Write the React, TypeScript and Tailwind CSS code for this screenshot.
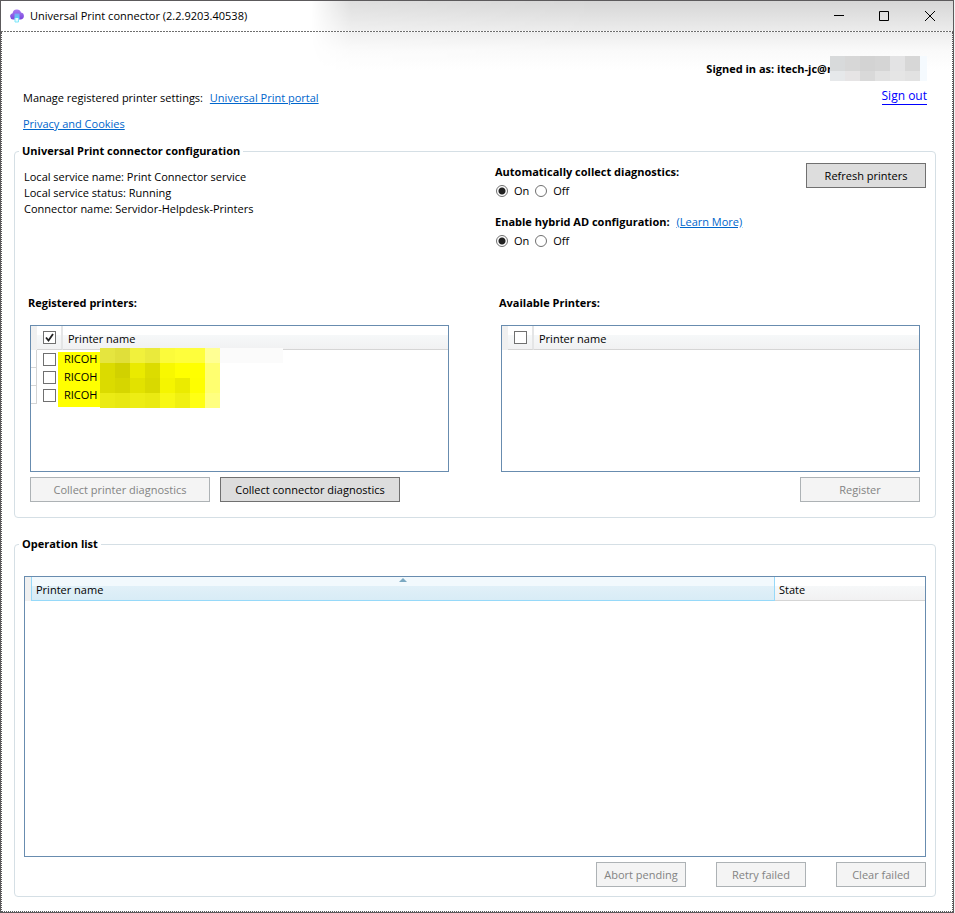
import React, { useState } from 'react';

interface MosaicProps {
  rows: string[][];
}

// Account name and printer models are masked with coarse pixel blocks
const ACCOUNT_MASK = [
  ['#d8dadb', '#d7d7d7', '#d3d3d3', '#d5d5d5', '#e3e3e4', '#d7d7d7'],
  ['#e6e8ea', '#e6e4e5', '#d9d9d9', '#e2e2e2', '#e5e5e5', '#e2e2e2'],
];

const PRINTER_MASK = [
  ['#e5e53f', '#e0df3a', '#f1f13c', '#eaea3c', '#fbfb3b', '#fefe3c', '#fefe3c', '#ffff94'],
  ['#dbdb00', '#d1d100', '#eaea00', '#dcdc00', '#f8f800', '#ffff00', '#ffff00', '#ffff70'],
  ['#dbdb00', '#d6d600', '#e2e200', '#d9d900', '#f5f500', '#ebeb00', '#fefe00', '#ffff70'],
  ['#ebeb14', '#e8e812', '#eded14', '#eaea12', '#f8f814', '#f0f012', '#ffff14', '#ffff80'],
];

const Mosaic: React.FC<MosaicProps> = ({ rows }) => (
  <>
    {rows.map((row, y) =>
      row.map((fill, x) => <rect key={`${x}-${y}`} x={x * 15} y={y * 15} width="15" height="15" fill={fill} />)
    )}
  </>
);

const ConnectorLogo: React.FC = () => (
  <svg width="16" height="16" viewBox="0 0 16 16" aria-hidden="true">
    <defs>
      <linearGradient id="cloud" x1="0" y1="0" x2="0" y2="1">
        <stop offset="0" stopColor="#a87cf3" />
        <stop offset="1" stopColor="#7a45dc" />
      </linearGradient>
      <linearGradient id="printer" x1="0" y1="0" x2="0" y2="1">
        <stop offset="0" stopColor="#7aa2f5" />
        <stop offset="1" stopColor="#56d6f5" />
      </linearGradient>
    </defs>
    <path d="M4 11.500a3.200 3.200 0 0 1-.4-6.300A4.300 4.300 0 0 1 12 4.600a3.500 3.500 0 0 1 0 6.900z" fill="url(#cloud)" />
    <path d="M5.500 5.500h5v5.500h-5z" fill="url(#printer)" />
    <path d="M6 10v4h3.500v-4" fill="#e3fbff" stroke="#7fe6f9" />
  </svg>
);

interface PushButtonProps {
  label: string;
  width: string;
  disabled?: boolean;
}

const PushButton: React.FC<PushButtonProps> = ({ label, width, disabled }) => (
  <button
    type="button"
    disabled={disabled}
    className={`h-[25px] border border-[#707070] bg-[#dddddd] pt-px text-center whitespace-nowrap disabled:border-[#adb2b5] disabled:bg-[#f4f4f4] disabled:text-[#838383] ${width}`}
  >
    {label}
  </button>
);

interface CheckBoxProps {
  label: string;
  checked: boolean;
  onChange: () => void;
}

const CheckBox: React.FC<CheckBoxProps> = ({ label, checked, onChange }) => (
  <span className="relative ml-[6px] block size-[13px]">
    <input
      type="checkbox"
      aria-label={label}
      checked={checked}
      onChange={onChange}
      className="block size-[13px] appearance-none border border-[#707070] bg-white"
    />
    {checked && (
      <svg className="pointer-events-none absolute inset-0" width="13" height="13" viewBox="0 0 13 13" aria-hidden="true">
        <path d="M3 6.500l2.500 3L10 3" fill="none" stroke="#212121" strokeWidth="1.800" />
      </svg>
    )}
  </span>
);

interface OnOffProps {
  name: string;
  legend: string;
}

const OnOff: React.FC<OnOffProps> = ({ name, legend }) => {
  const [value, setValue] = useState('On');
  return (
    <div role="radiogroup" aria-label={legend} className="mt-[3px] flex gap-[6px] pl-px">
      {['On', 'Off'].map(option => (
        <label key={option} className="flex items-center gap-[6px]">
          <input
            type="radio"
            name={name}
            checked={value === option}
            onChange={() => setValue(option)}
            className="size-[12px] appearance-none rounded-full border border-[#707070] bg-white checked:bg-[radial-gradient(circle,#212121_3px,#ffffff_4px)]"
          />
          {option}
        </label>
      ))}
    </div>
  );
};

interface PrinterListProps {
  title: string;
  printers: string[];
  allChecked: boolean;
  children: React.ReactNode;
}

const PrinterList: React.FC<PrinterListProps> = ({ title, printers, allChecked, children }) => {
  const [all, setAll] = useState(allChecked);
  const [picked, setPicked] = useState<number[]>([]);

  const toggle = (index: number) => {
    setPicked(picked.includes(index) ? picked.filter(i => i !== index) : [...picked, index]);
  };

  return (
    <section>
      <h2 className="font-bold">{title}</h2>
      <div className="mt-[14px] px-[2px]">
        <div className="relative h-[147px] border border-[#688caf] bg-white">
          {printers.length > 0 && <div className="absolute top-[26px] left-[27px] h-[55px] w-[42px] bg-[#ffff00]" />}
          <table className="relative w-full table-fixed border-separate border-spacing-0 text-left">
            <thead>
              <tr className="h-[24px]">
                <td className="w-[6px] bg-[#f0f0f0] p-0" />
                <th className="w-[26px] border-r-2 border-b border-r-[#e4e5e6] border-b-[#d5d5d5] bg-[linear-gradient(#ffffff_40%,#f6f8f9_40%,#f1f1f2)] p-0">
                  <CheckBox label={`Select all: ${title}`} checked={all} onChange={() => setAll(!all)} />
                </th>
                <th className="border-b border-[#d5d5d5] bg-[linear-gradient(#ffffff_40%,#f6f8f9_40%,#f1f1f2)] p-0 pt-[2px] pl-[5px] font-normal">
                  Printer name
                </th>
              </tr>
            </thead>
            <tbody>
              {printers.map((printer, index) => (
                <tr key={index} className="h-[18px]">
                  <td className="border-r border-b border-[#d5d5d5] p-0" />
                  <td className="p-0">
                    <CheckBox label={`${printer} ${index + 1}`} checked={picked.includes(index)} onChange={() => toggle(index)} />
                  </td>
                  <td className="p-0 pl-px">{printer}</td>
                </tr>
              ))}
            </tbody>
          </table>
          {printers.length > 0 && (
            <svg className="pointer-events-none absolute top-[22px] left-[69px]" width="183" height="60" aria-hidden="true">
              <rect x="120" width="63" height="15" fill="#fbfbfb" />
              <Mosaic rows={PRINTER_MASK} />
            </svg>
          )}
        </div>
        <div className="mt-[5px] flex gap-[10px]">{children}</div>
      </div>
    </section>
  );
};

const App: React.FC = () => {
  return (
    <div className="min-h-screen bg-[#f3f3f3] pr-px font-['Open_Sans','Noto_Sans',sans-serif] text-[11px] leading-[16px] text-black">
      <div className="relative flex min-h-screen flex-col border border-[#5c5a5c] bg-white">
        {/* Soft shade falling over the top right of the window */}
        <div className="pointer-events-none absolute inset-x-0 top-0 h-[70px] bg-[linear-gradient(#d6d6d6,#ececec_30px,#fafafa_50px,#ffffff)] [mask-image:linear-gradient(to_right,transparent_310px,rgba(0,0,0,0.800)_350px,black_600px)]" />

        <header className="relative flex h-[30px] items-center pl-[8px]">
          <ConnectorLogo />
          <h1 className="ml-[5px] flex-1">Universal Print connector (2.2.9203.40538)</h1>
          <button type="button" aria-label="Minimize" className="flex h-full w-[46px] items-center justify-center">
            <svg width="12" height="10" viewBox="0 0 12 10" stroke="#000">
              <path d="M2 4.500h10" />
            </svg>
          </button>
          <button type="button" aria-label="Maximize" className="flex h-full w-[46px] items-center justify-center">
            <svg width="10" height="10" viewBox="0 0 10 10" fill="none" stroke="#000">
              <path d="M.5.5h9v9h-9z" />
            </svg>
          </button>
          <button type="button" aria-label="Close" className="flex h-full w-[46px] items-center justify-center">
            <svg width="10" height="10" viewBox="0 0 10 10" stroke="#000">
              <path d="M0 0l10 10M10 0L0 10" />
            </svg>
          </button>
        </header>
        <div className="relative h-px bg-[repeating-linear-gradient(to_right,#6e6e6e_0px,#6e6e6e_2px,#ffffff_2px,#ffffff_3px)]" />

        <main className="relative flex flex-1 flex-col border-x border-b border-dotted border-[#5c5a5c] pr-[16px] pb-[14px] pl-[12px]">
          <div className="flex justify-between px-[9px] pt-[24px]">
            <div className="pt-[34px]">
              <p>
                Manage registered printer settings:{' '}
                <a href="#portal" className="ml-[4px] text-[#0066cc] underline">Universal Print portal</a>
              </p>
              <p className="mt-[10px]">
                <a href="#privacy" className="text-[#0066cc] underline">Privacy and Cookies</a>
              </p>
            </div>
            <div className="flex flex-col items-end">
              <p className="flex items-center font-bold">
                Signed in as: itech-jc@r
                <svg className="relative -ml-[2px]" width="97" height="25" aria-hidden="true">
                  <rect width="97" height="25" fill="#f5fafe" />
                  <Mosaic rows={ACCOUNT_MASK} />
                </svg>
              </p>
              <a href="#signout" className="mt-[7px] border-b border-[#0000ff] text-[12px] text-[#0000ff]">Sign out</a>
            </div>
          </div>

          <fieldset className="mt-[11px] rounded-[4px] border border-[#d5dfe5]">
            <legend className="ml-[4px] px-[3px] font-bold">Universal Print connector configuration</legend>
            <div className="grid grid-cols-2 gap-[40px] px-[9px] pb-[46px]">
              <div className="pt-[10px]">
                <p>Local service name: Print Connector service</p>
                <p>Local service status: Running</p>
                <p>Connector name: Servidor-Helpdesk-Printers</p>
              </div>
              <div className="flex items-start justify-between pt-[4px]">
                <div className="pt-px">
                  <p className="font-bold">Automatically collect diagnostics:</p>
                  <OnOff name="diagnostics" legend="Automatically collect diagnostics" />
                  <p className="mt-[15px]">
                    <b>Enable hybrid AD configuration:</b>{' '}
                    <a href="#hybrid" className="ml-[4px] text-[#0066cc] underline">(Learn More)</a>
                  </p>
                  <OnOff name="hybrid" legend="Enable hybrid AD configuration" />
                </div>
                <PushButton label="Refresh printers" width="w-[120px]" />
              </div>
            </div>
            <div className="grid grid-cols-2 gap-[48px] px-[13px] pb-[15px]">
              <PrinterList title="Registered printers:" printers={['RICOH', 'RICOH', 'RICOH']} allChecked>
                <PushButton label="Collect printer diagnostics" width="w-[180px]" disabled />
                <PushButton label="Collect connector diagnostics" width="w-[180px]" />
              </PrinterList>
              <PrinterList title="Available Printers:" printers={[]} allChecked={false}>
                <PushButton label="Register" width="ml-auto w-[120px]" disabled />
              </PrinterList>
            </div>
          </fieldset>

          <fieldset className="mt-[18px] rounded-[4px] border border-[#d5dfe5] px-[9px] pb-[9px]">
            <legend className="-ml-[5px] px-[3px] font-bold">Operation list</legend>
            <div className="mt-[24px] min-h-[281px] border border-[#688caf] bg-white">
              <table className="w-full table-fixed border-separate border-spacing-0 text-left">
                <thead>
                  <tr className="h-[24px]">
                    <td className="w-[6px] bg-[#f0f0f0] p-0" />
                    <th
                      aria-sort="ascending"
                      className="relative border-x border-b border-[#96d9f9] bg-[linear-gradient(#f2f9fd_40%,#e1f0f8_40%,#d8ecf6)] p-0 pt-[2px] pl-[4px] font-normal"
                    >
                      <svg className="absolute top-[1px] left-1/2 -ml-[4px]" width="8" height="4" viewBox="0 0 8 4" aria-hidden="true">
                        <path d="M0 4l4-4 4 4z" fill="#7ba9c2" />
                      </svg>
                      Printer name
                    </th>
                    <th className="w-[150px] border-b border-[#d5d5d5] bg-[linear-gradient(#ffffff_40%,#f6f8f9_40%,#f1f1f2)] p-0 pt-[2px] pl-[4px] font-normal">
                      State
                    </th>
                  </tr>
                </thead>
              </table>
            </div>
            <div className="mt-[5px] flex justify-end gap-[30px]">
              <PushButton label="Abort pending" width="w-[90px]" disabled />
              <PushButton label="Retry failed" width="w-[90px]" disabled />
              <PushButton label="Clear failed" width="w-[90px]" disabled />
            </div>
          </fieldset>
        </main>
      </div>
    </div>
  );
};

export default App;
